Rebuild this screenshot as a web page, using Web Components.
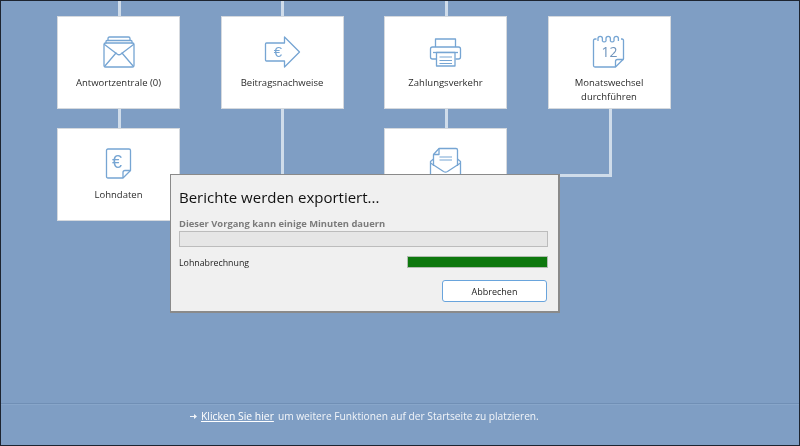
<!DOCTYPE html>
<html lang="de"><head><meta charset="utf-8"><title>Startseite</title>
<style>
html,body{margin:0;padding:0;height:100%;background:#7f9ec4;overflow:hidden}
body{font-family:"Open Sans","Noto Sans",sans-serif}
</style></head><body>
<app-window>
  <flow-canvas>
    <flow-line style="left:116.500px;top:-1px;width:3px;height:18px"></flow-line>
    <flow-line style="left:280px;top:-1px;width:3px;height:18px"></flow-line>
    <flow-line style="left:443.500px;top:-1px;width:3px;height:18px"></flow-line>
    <flow-line style="left:116.500px;top:108px;width:3px;height:20px"></flow-line>
    <flow-line style="left:280px;top:108px;width:3px;height:70px"></flow-line>
    <flow-line style="left:443.500px;top:108px;width:3px;height:20px"></flow-line>
    <flow-line style="left:607.500px;top:108px;width:3px;height:66px"></flow-line>
    <flow-line style="left:505px;top:173px;width:105.500px;height:3px"></flow-line>
    <flow-card label="Antwortzentrale (0)"><svg viewBox="0 0 40 40" fill="none" stroke="#76a5d3" stroke-width="1.3" stroke-linejoin="round" stroke-linecap="round"><path d="M9 8V6.500q0-1.500 1.500-1.500h19q1.500 0 1.500 1.500V8"/><path d="M7 11V9.500q0-1 1-1h24q1 0 1 1V11"/><rect x="5" y="11" width="30" height="24" rx="1.500"/><path d="M5.500 12.500 18 22q2 1.500 4 0l12.500-9.500"/><path d="M5.500 34.500 17 21M34.500 34.500 23 21"/></svg></flow-card>
    <flow-card label="Beitragsnachweise"><svg viewBox="0 0 40 40" fill="none" stroke="#76a5d3" stroke-width="1.3" stroke-linejoin="round"><path d="M22.500 11V5L37.500 20 22.500 35V29H4.500q-1 0-1-1V12q0-1 1-1z"/><text x="16" y="25" font-family="Liberation Sans,sans-serif" font-size="15" fill="#76a5d3" stroke="none" text-anchor="middle">€</text></svg></flow-card>
    <flow-card label="Zahlungsverkehr"><svg viewBox="0 0 40 40" fill="none" stroke="#76a5d3" stroke-width="1.3" stroke-linejoin="round"><path d="M9.500 15V7h20v8"/><path d="M10 27H6.500q-2 0-2-2V17q0-2 2-2h26q2 0 2 2v8q0 2-2 2H29.500"/><path d="M7 20.500H32"/><rect x="10.500" y="20.500" width="18.500" height="13.500" fill="#fff"/><path d="M13.500 25H26M13.500 28.500H26M13.500 31.500H26" stroke-width="1"/></svg></flow-card>
    <flow-card label="Monatswechsel durchführen"><svg viewBox="0 0 40 40" fill="none" stroke="#76a5d3" stroke-width="1.3" stroke-linejoin="round"><path d="M7.500 7H6q-1.500 0-1.500 1.500V33.500Q4.500 35 6 35H26.500L34.500 27V8.500Q34.500 7 33 7H32"/><path d="M26.500 35V29.500q0-2 2-2h6"/><path d="M9 9V6.500a2.200 2.200 0 0 1 4.400 0V9a2.200 2.200 0 0 0 3.600 0V6.500a2.200 2.200 0 0 1 4.400 0V9a2.200 2.200 0 0 0 3.600 0V6.500a2.200 2.200 0 0 1 4.400 0V9"/><text x="20.500" y="25" font-family="Open Sans,sans-serif" font-size="14" fill="#6f94bd" stroke="none" text-anchor="middle">12</text></svg></flow-card>
    <flow-card label="Lohndaten"><svg viewBox="0 0 40 40" fill="none" stroke="#76a5d3" stroke-width="1.3" stroke-linejoin="round"><path d="M24 34H9q-1.500 0-1.500-1.500v-26Q7.500 5 9 5H30q1.500 0 1.500 1.500V26.500z"/><path d="M24 34V28.500q0-2 2-2h5.500"/><text x="18" y="24" font-family="Liberation Sans,sans-serif" font-size="18" fill="#76a5d3" stroke="none" text-anchor="middle">€</text></svg></flow-card>
    <flow-spacer></flow-spacer>
    <flow-card label="Meldungen"><svg viewBox="0 0 40 40" fill="none" stroke="#76a5d3" stroke-width="1.3" stroke-linejoin="round"><path d="M7.500 22V10.500L13 4.500H30q1.500 0 1.500 1.500V22"/><path d="M13 4.500V10.500H7.500"/><path d="M13.500 13H26M13.500 16H26" stroke-width="1.100"/><path d="M7.500 15 4.500 17.500V38H34.500V17.500L31.500 15"/><path d="M4.500 19 17.500 27.500q2 1.200 4 0L34.500 19"/></svg></flow-card>
  </flow-canvas>
  <hint-bar><a slot="link" href="#">Klicken Sie hier</a>um weitere Funktionen auf der Startseite zu platzieren.</hint-bar>
  <export-dialog title-text="Berichte werden exportiert..." note="Dieser Vorgang kann einige Minuten dauern" task="Lohnabrechnung" cancel="Abbrechen"></export-dialog>
</app-window>
<script>
function def(name, html, init){
  customElements.define(name, class extends HTMLElement{
    constructor(){super();this.attachShadow({mode:'open'}).innerHTML=html;}
    connectedCallback(){if(init)init(this);}
  });
}
def('app-window',`<style>
:host{display:flex;flex-direction:column;box-sizing:border-box;width:800px;height:446px;position:relative;background:#7f9ec4;border:1px solid #1d2430;overflow:hidden;filter:blur(.3px)}
</style><slot></slot>`);
def('flow-canvas',`<style>
:host{display:grid;flex:1;position:relative;grid-template-columns:repeat(4,123px);grid-auto-rows:93px;column-gap:40.500px;row-gap:19px;padding:15px 0 0 56px;align-content:start}
</style><slot></slot>`);
def('flow-line',`<style>:host{display:block;position:absolute;background:#cfdcea}</style>`);
def('flow-spacer',`<style>:host{display:block}</style>`);
def('flow-card',`<style>
:host{display:flex;flex-direction:column;align-items:center;position:relative;box-sizing:border-box;background:#fff;border:1px solid #d5d9de;padding-top:15px;font-size:9.500px;color:#2b2b2b}
.i{display:block;width:40px;height:40px;flex:none}
::slotted(svg){display:block;width:40px;height:40px;overflow:visible}
.l{margin-top:4px;width:96px;text-align:center;line-height:14px}
</style><div class="i"><slot></slot></div><div class="l"></div>`,el=>{el.shadowRoot.querySelector('.l').textContent=el.getAttribute('label');});
def('hint-bar',`<style>
:host{display:flex;flex:none;align-items:flex-start;box-sizing:border-box;height:42px;border-top:1px solid #708fb5;box-shadow:inset 0 1px 0 #88a6ca;padding:5px 0 0 189px;color:#f2f5f9;font-size:10.200px;line-height:15px;white-space:nowrap}
svg{width:7px;height:7px;margin:4px 4px 0 0;flex:none}
::slotted(a){color:#fff;text-decoration:underline;margin-right:4px;font-size:10.400px}
</style><svg viewBox="0 0 7 7"><path d="M0 3h4V1l3 2.500-3 2.500V4H0z" fill="#f2f5f9"/></svg><slot name="link"></slot><slot></slot>`);
def('export-dialog',`<style>
:host{display:flex;flex-direction:column;position:absolute;left:169px;top:173px;box-sizing:border-box;width:390px;height:139px;background:#f0f0f0;border:1px solid #8a8a8a;border-right-width:2px;border-bottom-width:2px;padding:10px 10px 0 8px;color:#222;font-size:8.800px}
h1{margin:0;font:400 15px/24px "Open Sans",sans-serif;color:#111}
.n{margin-top:8px;font-weight:700;font-size:9.400px;color:#7b7b7b;line-height:14px;white-space:nowrap}
.bar{height:16px;box-sizing:border-box;background:#e6e6e6;border:1px solid #bcbcbc}
.row{display:flex;justify-content:space-between;align-items:center;margin-top:9px}
.t{position:relative;top:1px}
.p{width:141px;height:12px;box-sizing:border-box;background:#0d780d;border:1px solid #b0bdb0}
.b{display:flex;justify-content:flex-end;margin-top:12px}
button{width:105px;height:22px;margin-right:1px;background:#fff;border:1.500px solid #69a4dc;border-radius:3px;font:9px "Open Sans",sans-serif;color:#222;padding:0}
</style><h1></h1><div class="n"></div><div class="bar"></div>
<div class="row"><span class="t"></span><div class="p"></div></div>
<div class="b"><button></button></div>`,el=>{const s=el.shadowRoot;
 s.querySelector('h1').textContent=el.getAttribute('title-text');
 s.querySelector('.n').textContent=el.getAttribute('note');
 s.querySelector('.t').textContent=el.getAttribute('task');
 s.querySelector('button').textContent=el.getAttribute('cancel');});
</script>
</body></html>
